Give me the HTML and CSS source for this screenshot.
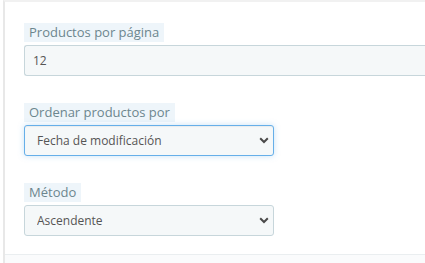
FILE: index.html
```html
<!DOCTYPE html>
<html lang="es">
<head>
<meta charset="utf-8">
<link rel="stylesheet" href="styles.css">
</head>
<body>
<div class="panel">
  <div class="form">
    <div class="group">
      <label class="lbl">Productos por página</label>
      <input class="field wide" type="text" value="12">
    </div>
    <div class="group">
      <label class="lbl">Ordenar productos por</label>
      <div class="sel-wrap">
        <select class="field sel focus"><option>Fecha de modificación</option></select>
        <svg class="chev" width="10" height="7" viewBox="0 0 10 7"><path d="M1.2 1.3 L5 5 L8.8 1.3" fill="none" stroke="#4a4a4a" stroke-width="2"/></svg>
      </div>
    </div>
    <div class="group">
      <label class="lbl">Método</label>
      <div class="sel-wrap">
        <select class="field sel"><option>Ascendente</option></select>
        <svg class="chev" width="10" height="7" viewBox="0 0 10 7"><path d="M1.2 1.3 L5 5 L8.8 1.3" fill="none" stroke="#4a4a4a" stroke-width="2"/></svg>
      </div>
    </div>
  </div>
  <div class="footer"></div>
</div>
</body>
</html>
```
FILE: styles.css
```css
html, body {
  margin: 0;
  padding: 0;
  background: #fff;
  overflow: hidden;
}
body {
  font-family: "Open Sans", "Liberation Sans", sans-serif;
  width: 425px;
  height: 263px;
}
.panel {
  margin-left: 3px;
  border-left: 2px solid #e8e8e8;
  height: 263px;
  display: flex;
  flex-direction: column;
  border-top: 2px solid #f1f1f1;
  box-sizing: border-box;
}
.form {
  padding: 21px 0 0 19px;
  display: flex;
  flex-direction: column;
  gap: 27px;
  height: 252px;
  flex: none;
  box-sizing: border-box;
}
.group {
  display: flex;
  flex-direction: column;
  align-items: flex-start;
  gap: 3px;
}
.lbl {
  display: inline-block;
  background: #eef5fa;
  color: #6c868e;
  font-size: 13px;
  line-height: 19px;
  height: 19px;
  padding: 0 5px;
}
.field {
  box-sizing: border-box;
  height: 31px;
  background: #f5f8f9;
  border: 1px solid #c7d6db;
  border-radius: 3px;
  font-family: "Open Sans", "Liberation Sans", sans-serif;
  font-size: 12px;
  color: #555;
  outline: none;
}
.wide {
  width: 401px;
  padding: 0 8px;
  border-right: none;
  border-radius: 3px 0 0 3px;
}
.sel-wrap {
  position: relative;
}
.sel {
  width: 250px;
  appearance: none;
  -webkit-appearance: none;
  padding: 0 12px;
}
.sel.focus {
  border-color: #66afe9;
  box-shadow: inset 0 1px 1px rgba(0,0,0,0.05), 0 0 6px rgba(102,175,233,0.35);
}
.chev {
  position: absolute;
  right: 5px;
  top: 12px;
}
.footer {
  border-top: 1px solid #eaeef0;
  background: #fafbfc;
  flex: 1;
}
```
